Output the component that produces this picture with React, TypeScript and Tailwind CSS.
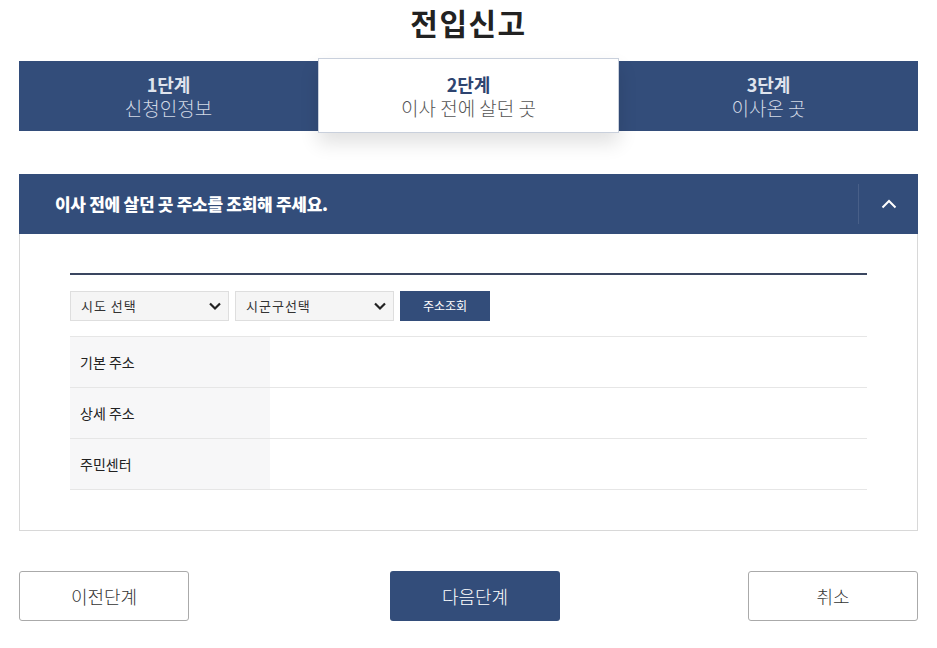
import React from 'react';

const steps = [
  { no: '1단계', label: '신청인정보' },
  { no: '2단계', label: '이사 전에 살던 곳' },
  { no: '3단계', label: '이사온 곳' },
];

const rows = ['기본 주소', '상세 주소', '주민센터'];

const ChevronDown = () => (
  <svg width="14" height="14" viewBox="0 0 14 14" fill="none">
    <path d="M2 4.5L7 9.5L12 4.5" stroke="#222" strokeWidth="2.2" />
  </svg>
);

const App: React.FC = () => {
  const current = 1;

  return (
    <div
      className="w-[937px] h-[648px] bg-white px-[19px] text-[#333]"
      style={{ fontFamily: '"Noto Sans CJK KR", "Noto Sans", sans-serif' }}
    >
      {/* Title */}
      <h1 className="h-[58px] pt-[2px] text-center text-[30px] font-bold leading-[40px] tracking-[1.5px] text-[#222]">전입신고</h1>

      {/* Steps */}
      <div className="flex items-center h-[75px]">
        {steps.map((s, i) =>
          i === current ? (
            <div
              key={s.no}
              className="relative z-10 flex-1 h-[75px] bg-white border border-[#c9d0dc] flex flex-col items-center justify-center shadow-[0_10px_18px_rgba(0,0,0,0.12)]"
            >
              <span className="text-[18px] font-bold leading-[23px] text-[#2e4470]">{s.no}</span>
              <span className="text-[19px] font-light leading-[23px] text-[#555]">{s.label}</span>
            </div>
          ) : (
            <div key={s.no} className="flex-1 h-[70px] bg-[#334d7a] flex flex-col items-center justify-center">
              <span className="text-[18px] font-bold leading-[23px] text-[#dfe4ed]">{s.no}</span>
              <span className="text-[19px] font-light leading-[23px] text-[#d2d9e5]">{s.label}</span>
            </div>
          )
        )}
      </div>

      {/* Panel */}
      <section className="mt-[41px]">
        <div className="h-[60px] bg-[#334d7a] flex items-center">
          <h2 className="flex-1 pl-[36px] text-[17px] font-extrabold text-white tracking-[-0.3px]">
            이사 전에 살던 곳 주소를 조회해 주세요.
          </h2>
          <div className="w-px h-[40px] bg-[#485f88]" />
          <button className="w-[59px] h-[60px] flex items-center justify-center">
            <svg width="16" height="10" viewBox="0 0 16 10" fill="none">
              <path d="M1.5 8.5L8 2L14.5 8.5" stroke="white" strokeWidth="2" />
            </svg>
          </button>
        </div>

        <div className="border border-t-0 border-[#d8d8d8] px-[50px] pt-[39px] pb-[40px]">
          <div className="border-t-2 border-[#3a4660]" />

          <div className="flex gap-[6px] mt-[16px]">
            <div className="w-[159px] h-[30px] bg-[#f5f5f5] border border-[#dedede] flex items-center justify-between pl-[10px] pr-[6px]">
              <span className="text-[13px] tracking-[1px] text-[#333]">시도 선택</span>
              <ChevronDown />
            </div>
            <div className="w-[159px] h-[30px] bg-[#f5f5f5] border border-[#dedede] flex items-center justify-between pl-[10px] pr-[6px]">
              <span className="text-[13px] tracking-[1px] text-[#333]">시군구선택</span>
              <ChevronDown />
            </div>
            <button className="w-[90px] h-[30px] bg-[#334d7a] text-white text-[12px]">주소조회</button>
          </div>

          <div className="mt-[15px] border-t border-[#e6e6e6]">
            {rows.map(r => (
              <div key={r} className="flex h-[51px] border-b border-[#e6e6e6]">
                <div className="w-[200px] bg-[#f7f7f8] flex items-center pl-[10px] text-[14px] font-normal text-[#222]">
                  {r}
                </div>
                <div className="flex-1" />
              </div>
            ))}
          </div>
        </div>
      </section>

      {/* Buttons */}
      <div className="mt-[40px] flex items-center">
        <button className="w-[170px] h-[50px] rounded-[3px] border border-[#aaa] bg-white text-[18px] font-light text-[#333]">
          이전단계
        </button>
        <button className="ml-[201px] w-[170px] h-[50px] rounded-[3px] bg-[#334d7a] text-[18px] font-light text-white">
          다음단계
        </button>
        <button className="ml-auto w-[170px] h-[50px] rounded-[3px] border border-[#aaa] bg-white text-[18px] font-light text-[#333]">
          취소
        </button>
      </div>
    </div>
  );
};

export default App;
